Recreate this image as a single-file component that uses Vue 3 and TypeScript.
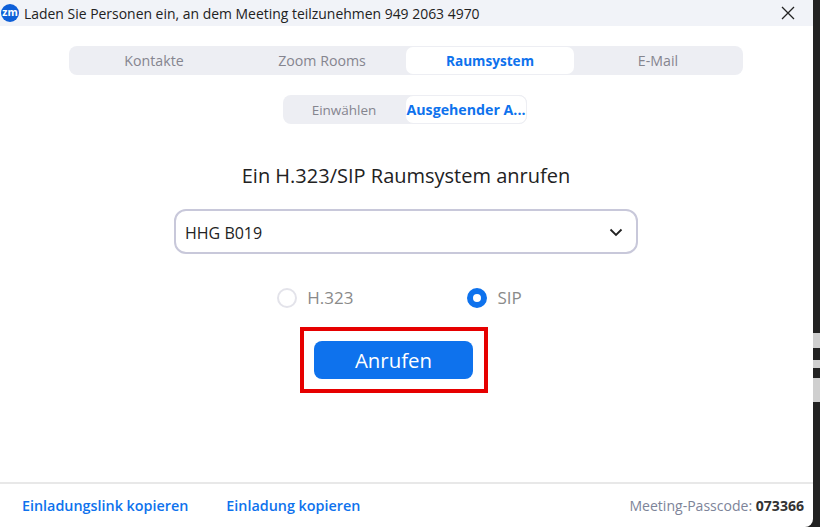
<template>
  <div class="desktop">
    <div class="window">
      <header class="titlebar">
        <span class="logo">zm</span>
        <span class="title">Laden Sie Personen ein, an dem Meeting teilzunehmen 949 2063 4970</span>
        <svg class="close" width="14" height="14" viewBox="0 0 14 14">
          <path d="M1 1l12 12M13 1L1 13" stroke="#222" stroke-width="1.3" fill="none" />
        </svg>
      </header>

      <main class="body">
        <div class="tabs">
          <div v-for="t in tabs" :key="t" class="tab" :class="{ active: t === 'Raumsystem' }">{{ t }}</div>
        </div>

        <div class="subtabs">
          <div class="subtab">Einwählen</div>
          <div class="subtab active">Ausgehender A...</div>
        </div>

        <h1 class="heading">Ein H.323/SIP Raumsystem anrufen</h1>

        <div class="select">
          <span>HHG B019</span>
          <svg width="14" height="9" viewBox="0 0 14 9">
            <path d="M1.5 1.5L7 7l5.5-5.5" stroke="#222" stroke-width="1.8" fill="none" />
          </svg>
        </div>

        <div class="radios">
          <label class="radio"><span class="dot"></span>H.323</label>
          <label class="radio"><span class="dot on"></span>SIP</label>
        </div>

        <div class="highlight">
          <button class="call">Anrufen</button>
        </div>
      </main>

      <footer class="footer">
        <a class="link">Einladungslink kopieren</a>
        <a class="link">Einladung kopieren</a>
        <span class="passcode">Meeting-Passcode: <b>073366</b></span>
      </footer>
    </div>
    <div class="edge">
      <span class="strip first"></span>
      <span class="strip second"></span>
      <span class="strip third"></span>
    </div>
  </div>
</template>

<script setup lang="ts">
const tabs = ['Kontakte', 'Zoom Rooms', 'Raumsystem', 'E-Mail']
</script>

<style>
html, body { margin: 0; background: #1f1f1f; overflow: hidden; }
</style>

<style scoped>
.desktop {
  width: 820px;
  height: 527px;
  display: flex;
  background: #222;
  font-family: "Open Sans", "Noto Sans", sans-serif;
}
.window {
  width: 813px;
  height: 527px;
  display: flex;
  flex-direction: column;
  background: #fff;
  border-bottom-right-radius: 8px;
}
.edge {
  flex: 1;
  display: flex;
  flex-direction: column;
}
.strip { display: block; background: #cfcfcf; }
.strip.first { height: 15px; margin-top: 333px; }
.strip.second { height: 8px; margin-top: 12px; }
.strip.third { height: 24px; margin-top: 10px; }

.titlebar {
  height: 26px;
  flex-shrink: 0;
  display: flex;
  align-items: center;
  padding: 0 18px 0 1px;
  background: #f1f3f8;
}
.logo {
  width: 18px;
  height: 18px;
  border-radius: 50%;
  background: #0e5fd8;
  color: #fff;
  font-size: 10.5px;
  font-weight: 700;
  line-height: 16px;
  text-align: center;
}
.title {
  flex: 1;
  margin-left: 5px;
  font-size: 13.95px;
  color: #222;
}

.body {
  flex: 1;
  display: flex;
  flex-direction: column;
  align-items: center;
  padding-right: 1px;
}

.tabs {
  width: 674px;
  height: 29px;
  margin-top: 20px;
  padding: 1px;
  box-sizing: border-box;
  display: grid;
  grid-template-columns: repeat(4, 1fr);
  background: #edeef3;
  border-radius: 8px;
}
.tab {
  display: flex;
  align-items: center;
  justify-content: center;
  font-size: 14.2px;
  color: #85858f;
  border-radius: 7px;
}
.tab.active {
  background: #fff;
  color: #0e72ed;
  font-size: 13.6px;
  font-weight: 700;
}

.subtabs {
  width: 244px;
  height: 29px;
  margin: 20px 2px 0 0;
  display: grid;
  grid-template-columns: 122px 122px;
  background: #edeef3;
  border-radius: 8px;
}
.subtab {
  display: flex;
  align-items: center;
  justify-content: center;
  font-size: 13.5px;
  color: #85858f;
  border-radius: 8px;
  white-space: nowrap;
}
.subtab.active {
  background: #fff;
  border: 1px solid #edeef3;
  box-sizing: border-box;
  color: #0e72ed;
  font-size: 14.2px;
  font-weight: 700;
}

.heading {
  margin: 39px 0 0;
  font-size: 20px;
  line-height: 26px;
  font-weight: 400;
  color: #222;
}

.select {
  width: 464px;
  height: 45px;
  margin-top: 20px;
  padding: 2px 13px 0 9px;
  box-sizing: border-box;
  display: flex;
  align-items: center;
  justify-content: space-between;
  border: 2px solid #c8c8da;
  border-radius: 12px;
  font-size: 16px;
  color: #222;
}

.radios {
  margin: 34px 13px 0 0;
  display: flex;
  gap: 114px;
}
.radio {
  display: flex;
  align-items: center;
  gap: 10px;
  font-size: 17px;
  line-height: 20px;
  color: #8a8a8a;
}
.dot {
  width: 20px;
  height: 20px;
  box-sizing: border-box;
  border: 2px solid #e3e3ea;
  border-radius: 50%;
  background: #fff;
}
.dot.on { border: 6px solid #0e72ed; }

.highlight {
  margin: 19px 24px 0 0;
  padding: 10px 11px 10px 10px;
  border: 4px solid #e60000;
  display: flex;
}
.call {
  width: 159px;
  height: 38px;
  border: 0;
  border-radius: 8px;
  background: #0e72ed;
  color: #fff;
  font-family: inherit;
  font-size: 20.4px;
  padding: 0;
}

.footer {
  height: 43px;
  flex-shrink: 0;
  border-top: 2px solid #e8e8e8;
  display: flex;
  align-items: center;
  padding: 0 9px 0 22px;
  font-size: 14.05px;
}
.link {
  margin-right: 38px;
  color: #0e72ed;
  font-size: 14.35px;
  font-weight: 600;
}
.passcode {
  margin-left: auto;
  color: #7d8499;
}
.passcode b { color: #333; }
</style>
